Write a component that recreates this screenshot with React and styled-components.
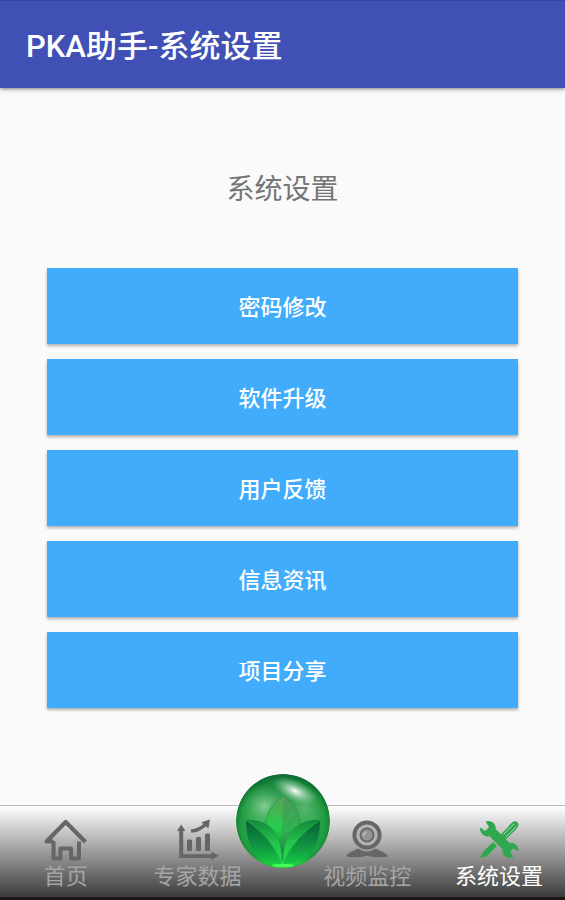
import React from 'react'
import styled, { createGlobalStyle } from 'styled-components'

const actions = ['密码修改', '软件升级', '用户反馈', '信息资讯', '项目分享']

export default function App() {
  return (
    <>
      <GlobalStyle />
      <Screen>
        <Header>
          <h1>PKA助手-系统设置</h1>
        </Header>
        <Main>
          <h2>系统设置</h2>
          <ActionList>
            {actions.map(item => <ActionButton key={item} type="button">{item}</ActionButton>)}
          </ActionList>
        </Main>
        <TabBar>
          <Tab href="#home"><HomeIcon />首页</Tab>
          <Tab href="#data"><ChartIcon />专家数据</Tab>
          <CenterSlot>
            <BallButton type="button" aria-label="PKA"><Ball /></BallButton>
          </CenterSlot>
          <Tab href="#video"><CameraIcon />视频监控</Tab>
          <Tab href="#settings" $active><ToolsIcon />系统设置</Tab>
        </TabBar>
      </Screen>
    </>
  )
}

function HomeIcon() {
  return (
    <TabIcon viewBox="0 0 44 44" fill="none" stroke="#666" strokeWidth="4" strokeLinejoin="round">
      <path d="M9.5 23.5H2.5L21.7 4l19.8 20" strokeWidth="4.2" />
      <path d="M9.5 23V40.5H16.5V30.5H27V40.5H35V23.5" />
    </TabIcon>
  )
}

function ChartIcon() {
  return (
    <TabIcon viewBox="0 0 44 44" fill="#666">
      <path d="M3.2 13H1L5.2 6.5l4.2 6.5H7.2V36.2H35.5V33.5l7.5 4.3-7.5 4.3V40H3.2z" />
      <rect x="11" y="21.5" width="5" height="11.5" rx="1.2" />
      <rect x="20" y="19" width="5" height="14" rx="1.2" />
      <rect x="29" y="15.5" width="5" height="17.5" rx="1.2" />
      <path d="M15 13.2Q23.5 12.5 30 6" fill="none" stroke="#666" strokeWidth="3.2" />
      <path d="M34 1.5l-1.6 9-7-6.2z" />
    </TabIcon>
  )
}

function CameraIcon() {
  return (
    <TabIcon viewBox="0 0 44 44" fill="none" stroke="#666">
      <path d="M1 38.5C3 34 9 33 13 30.5Q22 36.5 31 30.5C35 33 41 34 43 38.5Q32 40.5 22 37.8Q12 40.5 1 38.5z" fill="#666" stroke="none" />
      <circle cx="22" cy="17" r="12.6" fill="#b4b4b4" strokeWidth="4" />
      <circle cx="22" cy="17" r="6.6" fill="#949494" strokeWidth="1.8" />
      <path d="M18.5 18a4 4 0 0 1 3-4" stroke="#bbb" strokeWidth="1.6" />
    </TabIcon>
  )
}

function ToolsIcon() {
  return (
    <TabIcon viewBox="0 0 44 44" fill="#2fa84f">
      <path d="M3 40L6 34l10-10 4 4L9.5 38.5z" />
      <path d="M22.5 18L34.5 5Q38 2 40.5 4.5T39.5 11L27.5 22.5z" />
      <path d="M26.5 16.5L37 5.8M28.8 19L39.5 8.5" stroke="#c8dccb" strokeWidth="0.9" />
      <path d="M8.5 3.5C13 1.5 19.5 5 18.7 11L32.5 25C37 24 42 28 41.3 33.5L36.5 30.5 33 34 36.5 39C30.5 41.5 24.5 37.5 25.5 31.5L12.5 18.2C7.5 19.5 2.5 15.5 3 9.5L8.3 13 12 9z" />
    </TabIcon>
  )
}

function Ball() {
  return (
    <svg viewBox="0 0 94 94" aria-hidden="true">
      <defs>
        <radialGradient id="sphere" cx="47" cy="50" r="50" gradientUnits="userSpaceOnUse">
          <stop offset="0" stopColor="#3cbb5e" />
          <stop offset="0.6" stopColor="#2fa64e" />
          <stop offset="0.85" stopColor="#1f9c40" />
          <stop offset="1" stopColor="#0c702b" />
        </radialGradient>
        <linearGradient id="cap" x1="0" y1="0" x2="0" y2="1">
          <stop offset="0" stopColor="#0f6238" stopOpacity="0.5" />
          <stop offset="1" stopColor="#0b8030" stopOpacity="0" />
        </linearGradient>
        <radialGradient id="haze">
          <stop offset="0" stopColor="#9bd6a5" stopOpacity="0.8" />
          <stop offset="1" stopColor="#59bd70" stopOpacity="0" />
        </radialGradient>
        <radialGradient id="shine">
          <stop offset="0" stopColor="#fff" />
          <stop offset="0.3" stopColor="#d9efe0" stopOpacity="0.7" />
          <stop offset="1" stopColor="#a3d3b0" stopOpacity="0" />
        </radialGradient>
        <radialGradient id="floor">
          <stop offset="0" stopColor="#35ff50" />
          <stop offset="1" stopColor="#0bd72f" stopOpacity="0" />
        </radialGradient>
        <linearGradient id="midLeaf" x1="0" y1="0" x2="0" y2="1">
          <stop offset="0" stopColor="#5f9f58" />
          <stop offset="0.5" stopColor="#23cf4b" />
          <stop offset="1" stopColor="#087632" />
        </linearGradient>
        <linearGradient id="leafLight" x1="0" y1="0" x2="0" y2="1">
          <stop offset="0" stopColor="#128a3a" />
          <stop offset="0.5" stopColor="#28c04c" />
          <stop offset="1" stopColor="#15e54a" />
        </linearGradient>
        <linearGradient id="leafDark" x1="0" y1="0" x2="0" y2="1">
          <stop offset="0" stopColor="#086033" />
          <stop offset="0.5" stopColor="#0d8c40" />
          <stop offset="1" stopColor="#18c845" />
        </linearGradient>
        <clipPath id="ballClip">
          <circle cx="47" cy="47" r="47" />
        </clipPath>
      </defs>
      <g clipPath="url(#ballClip)">
        <circle cx="47" cy="47" r="47" fill="url(#sphere)" />
        <ellipse cx="47" cy="24" rx="44" ry="24" fill="url(#cap)" />
        <ellipse cx="28" cy="32" rx="24" ry="22" fill="url(#haze)" />
        <ellipse cx="69" cy="34" rx="22" ry="22" fill="url(#haze)" opacity="0.5" />
        <ellipse cx="59" cy="17" rx="24" ry="11" transform="rotate(25 59 17)" fill="url(#shine)" />
        <ellipse cx="47" cy="88" rx="36" ry="10" fill="url(#floor)" />
        <path d="M48 22C27 34 22 58 46 87C72 61 68 36 48 22z" fill="url(#midLeaf)" stroke="#168a38" strokeWidth="0.5" />
        <path d="M48 22Q45 53 46 87C72 61 68 36 48 22z" fill="#3d8f58" opacity="0.45" />
        <path d="M47 50L35 37M47 60L32 47M47 50L59 37M47 60L62 47" stroke="#65d573" strokeWidth="0.4" opacity="0.7" />
        <path d="M10 46C33 46 46 57 46 90C20 91 10 72 10 46z" fill="url(#leafDark)" />
        <path d="M10 46C33 46 46 57 46 90Q37 64 10 46z" fill="url(#leafLight)" />
        <path d="M84 46C62 46 47 57 47 90C74 91 84 72 84 46z" fill="url(#leafDark)" />
        <path d="M84 46C62 46 47 57 47 90Q57 64 84 46z" fill="url(#leafLight)" />
        <path d="M10 46Q37 64 46 90Q57 64 84 46" fill="none" stroke="#2bcb50" strokeWidth="0.6" />
        <path d="M17 61L31 79M24 59L38 81M77 61L63 79M70 59L56 81" stroke="#1d9443" strokeWidth="0.6" />
        <ellipse cx="47" cy="91.5" rx="11" ry="1.8" fill="#46ff55" />
      </g>
    </svg>
  )
}

const GlobalStyle = createGlobalStyle`
  * {
    box-sizing: border-box;
  }
  body {
    margin: 0;
    background: #fafafa;
    font-family: Roboto, "Noto Sans CJK SC", sans-serif;
  }
  h1, h2 {
    margin: 0;
  }
  button {
    font-family: inherit;
    border: 0;
    padding: 0;
    cursor: pointer;
  }
`

const Screen = styled.div`
  min-height: 100vh;
  display: flex;
  flex-direction: column;
`

const Header = styled.header`
  height: 88px;
  display: flex;
  align-items: center;
  padding: 4px 26px 0;
  background: #4050b5;
  border-top: 1px solid #3546a6;
  box-shadow: 0 1px 4px rgba(0, 0, 0, 0.5);
  h1 {
    color: #fff;
    font-size: 31px;
    font-weight: 500;
    line-height: 40px;
  }
`

const Main = styled.main`
  flex: 1;
  padding: 82px 47px 16px;
  h2 {
    color: #757575;
    font-size: 28px;
    font-weight: 400;
    line-height: 40px;
    text-align: center;
  }
`

const ActionList = styled.div`
  display: flex;
  flex-direction: column;
  gap: 15px;
  margin-top: 58px;
`

const ActionButton = styled.button`
  height: 76px;
  padding-top: 4px;
  color: #fff;
  background: #40acfb;
  font-size: 22px;
  font-weight: 500;
  line-height: 28px;
  box-shadow: 0 2px 3px rgba(0, 0, 0, 0.3);
`

const TabBar = styled.nav`
  display: flex;
  height: 95px;
  border-top: 1px solid #bbb;
  border-bottom: 3px solid #1b1719;
  background: linear-gradient(#fff, #3b3b3b);
`

const Tab = styled.a`
  flex: 1;
  display: flex;
  flex-direction: column;
  align-items: center;
  padding-top: 12px;
  color: ${props => props.$active ? '#fff' : '#a5a5a5'};
  font-size: 22px;
  line-height: 30px;
  text-decoration: none;
  white-space: nowrap;
`

const TabIcon = styled.svg`
  width: 44px;
  height: 44px;
`

const CenterSlot = styled.div`
  position: relative;
  width: 38px;
`

const BallButton = styled.button`
  position: absolute;
  bottom: 29px;
  left: 50%;
  width: 94px;
  height: 94px;
  transform: translateX(-50%);
  border-radius: 50%;
  background: none;
  svg {
    display: block;
  }
`
